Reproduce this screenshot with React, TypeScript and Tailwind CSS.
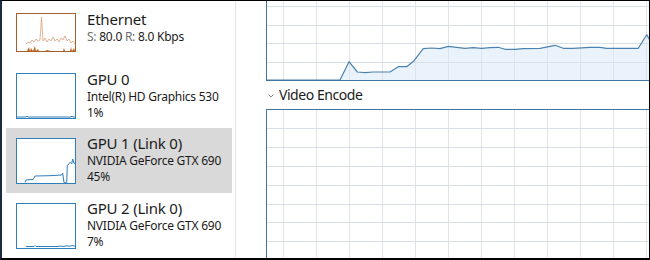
import React from "react";

const topPts: [number, number][] = [
  [0, 79], [73, 79], [82, 60.7], [90.3, 71], [98, 71.7], [106.3, 71], [123, 71], [131.3, 65.7], [139.7, 65.7],
  [147, 59.7], [156.3, 47.7], [164.7, 47], [173, 47.7], [181.3, 45.3], [189.7, 46.3], [198, 47.3], [206.3, 46.7],
  [214.7, 47.3], [223, 46.7], [231.3, 46.3], [238, 48.3], [248, 48.3], [256.3, 47.7], [273, 47.3], [288, 44.3],
  [296.3, 47.3], [306.3, 47.3], [323, 46.3], [333, 46.3], [339.7, 47.3], [371.3, 47.3], [379.7, 33.7], [382.3, 38.3],
  [388, 39], [420, 39],
];

function Grid({ h, rows }: { h: number; rows: number[] }) {
  const cols: number[] = [];
  for (let x = 16; x < 430; x += 33) cols.push(x);
  return (
    <g>
      {cols.map((x) => (
        <line key={"v" + x} x1={x + 0.5} y1={0} x2={x + 0.5} y2={h} stroke="#dde4eb" strokeWidth={1} />
      ))}
      {rows.map((y) => (
        <line key={"h" + y} x1={0} y1={y + 0.5} x2={430} y2={y + 0.5} stroke="#d9dfe5" strokeWidth={1} />
      ))}
    </g>
  );
}

function TopChart() {
  const line = topPts.map((p) => p.join(",")).join(" ");
  const fill = line + " 420,79 0,79";
  return (
    <svg width={420} height={79} className="block">
      <polygon points={fill} fill="#eaf3fb" />
      <Grid h={79} rows={[5, 24, 42, 61]} />
      <polyline points={line} fill="none" stroke="#4b82af" strokeWidth={1.2} strokeLinejoin="round" />
    </svg>
  );
}

function BottomChart() {
  return (
    <svg width={420} height={150} className="block">
      <Grid h={150} rows={[18, 37, 56, 75, 94, 112, 131]} />
    </svg>
  );
}

function EthThumb() {
  const pts: [number, number][] = [
    [9, 30], [11, 28], [13, 29], [15, 26], [17, 28], [19, 25], [21, 27], [23, 26], [24.5, 3], [26, 27], [28, 24],
    [30, 28], [32, 25], [34, 27], [36, 23], [38, 27], [40, 25], [42, 28], [44, 24], [46, 26], [48, 22], [50, 27],
    [52, 25], [54, 29], [56, 27], [58, 30],
  ];
  return (
    <div className="w-[60px] h-[39px] border border-[#a5602c] shrink-0">
      <svg width={58} height={37} className="block">
        <polyline points={pts.map((p) => p.join(",")).join(" ")} fill="none" stroke="#dba07a" strokeWidth={0.8} />
        <polygon
          points="10,37 12,33 13,37 14,34 16,37 18,32 19,37 21,35 22,37 28,37 30,36 34,37 46,37 47,34 48,37 53,37 54,33 55,37 57,34 58,37"
          fill="#c56a24"
        />
      </svg>
    </div>
  );
}

function GpuThumb({ pts }: { pts: string }) {
  return (
    <div className="w-[60px] h-[46px] border border-[#2f7fbd] shrink-0 bg-white">
      <svg width={58} height={44} className="block">
        <polyline points={pts} fill="none" stroke="#2f7fbd" strokeWidth={1} strokeLinejoin="round" />
      </svg>
    </div>
  );
}

function Item({
  thumb,
  title,
  lines,
  h,
  pt,
  tpt,
  selected,
}: {
  thumb: React.ReactNode;
  title: string;
  lines: React.ReactNode[];
  h: string;
  pt: string;
  tpt: string;
  selected?: boolean;
}) {
  return (
    <div className={`flex items-start pl-[10px] gap-[11px] ${h} ${selected ? "bg-[#d9d9d9]" : ""}`}>
      <div className={pt}>{thumb}</div>
      <div className={`${tpt} flex flex-col`}>
        <div className="text-[15px] leading-[19px] text-[#1b1b1b] tracking-[-0.2px] whitespace-nowrap">{title}</div>
        {lines.map((l, i) => (
          <div key={i} className="text-[12px] leading-[16px] text-[#1b1b1b] tracking-[-0.25px] whitespace-nowrap">
            {l}
          </div>
        ))}
      </div>
    </div>
  );
}

export default function App() {
  return (
    <div className="w-[650px] h-[260px] overflow-hidden flex bg-white border-t border-l-2 border-r border-b-2 border-t-black border-l-[#1b2a47] border-r-black border-b-black font-['Noto_Sans',sans-serif]">
      <aside className="w-[234px] shrink-0 border-r border-[#e2e2e2] pl-[4px] pr-[3px] flex flex-col">
        <Item
          h="h-[62px]"
          pt="pt-[12px]"
          tpt="pt-[9px]"
          thumb={<EthThumb />}
          title="Ethernet"
          lines={[
            <span key="s">
              <span className="text-[#6e6e6e]">S:</span> 80.0 <span className="text-[#6e6e6e]">R:</span> 8.0 Kbps
            </span>,
          ]}
        />
        <Item
          h="h-[66px]"
          pt="pt-[10px]"
          tpt="pt-[7px]"
          thumb={<GpuThumb pts="0,43 9,43 10,42 11,43 54,43 55,42 56,43 58,43" />}
          title="GPU 0"
          lines={["Intel(R) HD Graphics 530", "1%"]}
        />
        <Item
          selected
          h="h-[65px]"
          pt="pt-[10px]"
          tpt="pt-[6px]"
          thumb={
            <GpuThumb pts="8,43.3 9,41 16.3,40.3 18,37 33,36.7 44.7,36 45.7,34 47,43.7 49.7,43.7 50.3,26.7 53,23.3 54.7,25 55.7,20 57,24.3 58,24.3" />
          }
          title="GPU 1 (Link 0)"
          lines={["NVIDIA GeForce GTX 690", "45%"]}
        />
        <Item
          h="h-[66px]"
          pt="pt-[10px]"
          tpt="pt-[6px]"
          thumb={
            <GpuThumb pts="9,42.5 17,42.5 18,41.5 19,42.5 40,42.5 44,42 46,42.5 50,41.8 53,42.3 55,41.5 57,42 58,42" />
          }
          title="GPU 2 (Link 0)"
          lines={["NVIDIA GeForce GTX 690", "7%"]}
        />
      </aside>
      <main className="flex-1 pl-[30px] flex flex-col min-w-0">
        <div className="w-[420px] h-[80px] border-l border-b border-[#3f75a3] shrink-0">
          <TopChart />
        </div>
        <div className="h-[28px] flex items-center shrink-0 pl-[2px] gap-[5px]">
          <svg width={6} height={4} className="block mt-[1px]">
            <polyline points="0.5,0.5 3,3 5.5,0.5" fill="none" stroke="#8a8a8a" strokeWidth={1} />
          </svg>
          <span className="text-[14px] leading-[20px] text-[#1b1b1b] tracking-[-0.45px]">Video Encode</span>
        </div>
        <div className="w-[420px] flex-1 border-l border-t border-[#3f75a3]">
          <BottomChart />
        </div>
      </main>
    </div>
  );
}
